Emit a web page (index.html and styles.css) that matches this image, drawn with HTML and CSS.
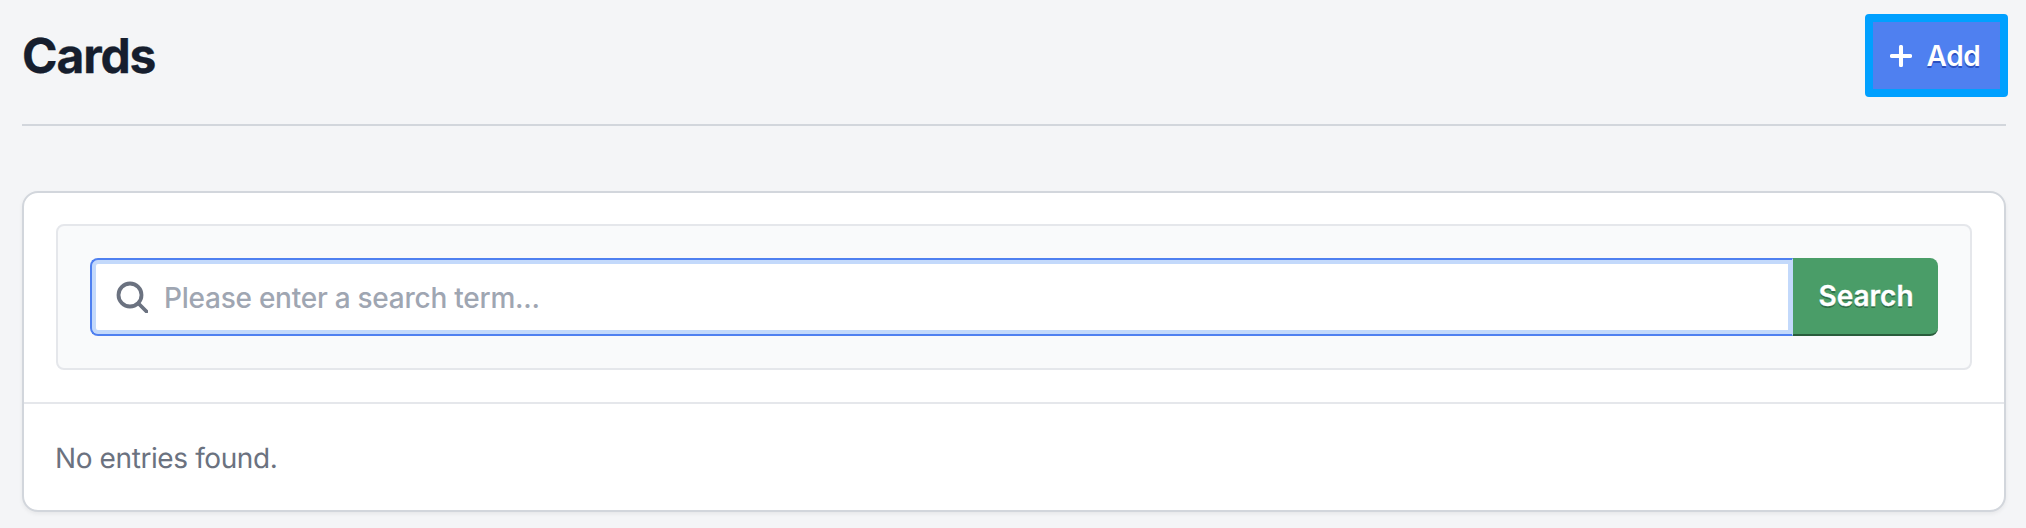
FILE: index.html
```html
<!DOCTYPE html>
<html lang="en">
<head>
<meta charset="utf-8">
<title>Cards</title>
<link rel="stylesheet" href="styles.css">
</head>
<body>
<main class="page">
  <header class="page-header">
    <h1 class="title">Cards</h1>
    <button class="add-btn" type="button">
      <svg class="add-icon" viewBox="0 0 24 24" aria-hidden="true"><path d="M12 2v20M2 12h20"/></svg>
      <span>Add</span>
    </button>
  </header>
  <section class="card">
    <div class="card-top">
      <form class="search-panel">
        <div class="search-row">
          <label class="search-field">
            <svg class="search-icon" viewBox="0 0 32 32" aria-hidden="true"><circle cx="14" cy="14" r="11.5"/><path d="M23 23l7.5 7.5"/></svg>
            <input class="search-input" type="text" placeholder="Please enter a search term...">
          </label>
          <button class="search-btn" type="button">Search</button>
        </div>
      </form>
    </div>
    <p class="empty">No entries found.</p>
  </section>
</main>
</body>
</html>
```
FILE: styles.css
```css
* { box-sizing: border-box; }
html, body { margin: 0; height: 100%; }
body {
  background: #f4f5f7;
  font-family: Inter, "Liberation Sans", sans-serif;
  text-rendering: geometricPrecision;
  overflow: hidden;
}
.page { padding: 14px 20px 0 22px; }
.page-header {
  display: flex;
  justify-content: space-between;
  align-items: flex-start;
  height: 112px;
  border-bottom: 2px solid #d2d6dc;
  width: 1984px;
}
.title {
  margin: 13px 0 0;
  font-size: 48px;
  line-height: 58px;
  font-weight: 700;
  color: #161e2e;
  letter-spacing: -1.1px;
  -webkit-text-stroke: 0.3px #161e2e;
}
.add-btn {
  display: flex;
  align-items: center;
  justify-content: center;
  gap: 15px;
  width: 143px;
  height: 83px;
  margin-right: -2px;
  border: 8px solid #00a0ff;
  border-radius: 4px;
  background: #4f80f0;
  color: #fff;
  font: 600 28px Inter, sans-serif;
  letter-spacing: -0.3px;
  text-shadow: 0 2px 0 #2b50c0;
  padding: 0 3px 0 0;
}
.add-icon { width: 22px; height: 22px; fill: none; stroke: #fff; stroke-width: 4.4; stroke-linecap: round; }
.card {
  margin-top: 65px;
  width: 1984px;
  height: 321px;
  background: #fff;
  border: 2px solid #d2d6dc;
  border-radius: 16px;
  box-shadow: 0 2px 4px rgba(0, 0, 0, .06);
}
.card-top { padding: 31px 32px; border-bottom: 2px solid #e5e7eb; height: 211px; }
.search-panel {
  height: 146px;
  padding: 32px;
  background: #f9fafb;
  border: 2px solid #e5e7eb;
  border-radius: 8px;
}
.search-row { display: flex; height: 78px; }
.search-field {
  flex: 1;
  display: flex;
  align-items: center;
  gap: 16px;
  padding-left: 24px;
  background: #fff;
  border: 2px solid #4f80f0;
  border-right: 1px solid #c3d9fb;
  border-radius: 8px 0 0 8px;
  box-shadow: inset 0 0 0 4px #c3d9fb;
}
.search-icon { width: 32px; height: 32px; fill: none; stroke: #6b7280; stroke-width: 3.8; stroke-linecap: round; flex: none; }
.search-input {
  flex: 1;
  height: 60px;
  margin: 2px 8px 0 0;
  border: 0;
  outline: 0;
  background: transparent;
  font: 500 28px Inter, sans-serif;
  letter-spacing: -0.25px;
  color: #161e2e;
  padding: 0;
}
.search-input::placeholder { color: #9fa6b2; opacity: 1; }
.search-btn {
  width: 145px;
  border: 0;
  border-bottom: 2px solid #2a5c3c;
  border-radius: 0 8px 8px 0;
  background: #4a9d68;
  color: #fff;
  font: 600 28px Inter, sans-serif;
  -webkit-text-stroke: 0.3px #fff;
  text-shadow: 0 2px 0 #2f7048;
  padding: 0 0 0 1px;
}
.empty {
  margin: 0;
  padding: 37px 31px 0;
  font-size: 28px;
  line-height: 34px;
  letter-spacing: -0.4px;
  color: #6b7280;
}
```
